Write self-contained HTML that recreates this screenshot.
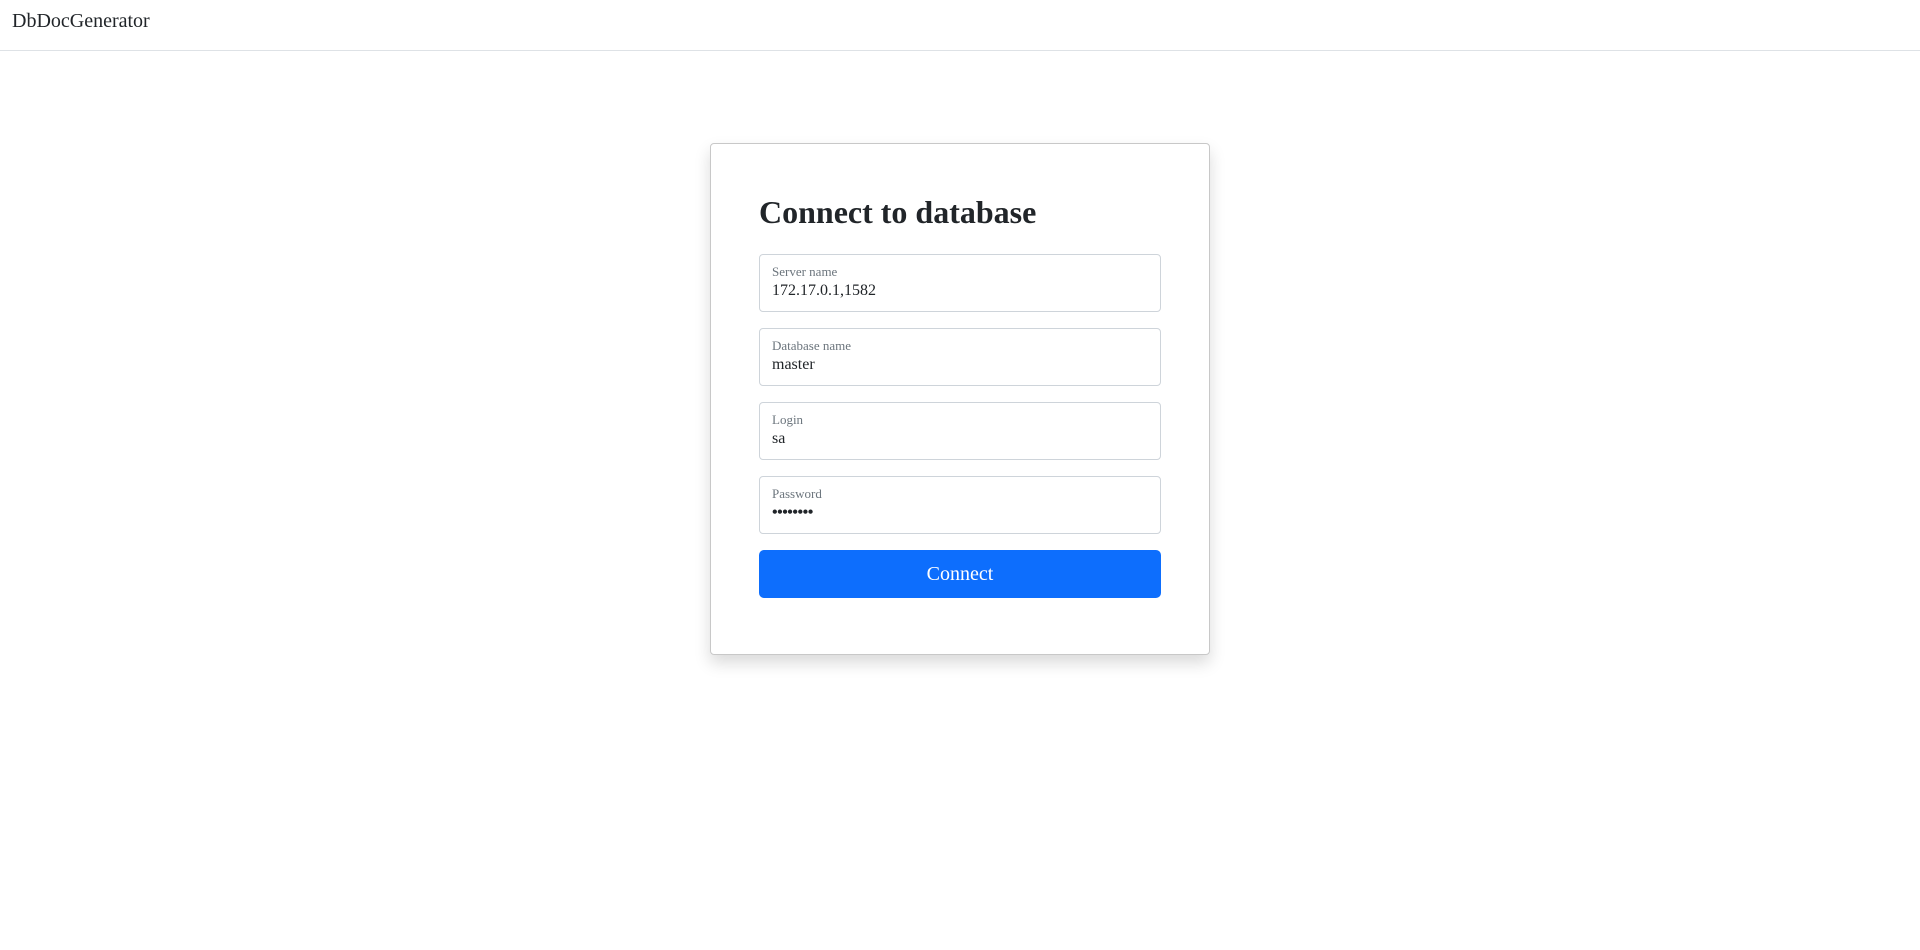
<!DOCTYPE html>
<html><head><style>
*{box-sizing:border-box;margin:0;padding:0}
body{width:1920px;height:950px;background:#fff;font-family:"Liberation Serif",serif;color:#212529;position:relative;overflow:hidden}
.nav{position:absolute;left:0;top:0;width:1920px;height:51px;border-bottom:1px solid #dee2e6}
.brand{position:absolute;left:12px;top:10px;font-size:20px;color:#212529}
.card{position:absolute;left:710px;top:143px;width:500px;height:512px;border:1px solid #c8c8c8;border-radius:4px;box-shadow:0 8px 16px rgba(0,0,0,.15)}
h2{position:absolute;left:48px;top:49px;font-size:32px;font-weight:bold;line-height:38px}
.f{position:absolute;left:48px;width:402px;height:58px;border:1px solid #ced4da;border-radius:4px}
.f .l{position:absolute;left:12px;top:9px;font-size:13px;color:#6c757d}
.f .v{position:absolute;left:12px;top:27px;font-size:16px;color:#212529}
.btn{position:absolute;left:48px;top:406px;width:402px;height:48px;background:#0d6efd;border-radius:5px;color:#fff;font-size:20px;text-align:center;line-height:48px}
</style></head><body>
<div class="nav"><div class="brand">DbDocGenerator</div></div>
<div class="card">
<h2>Connect to database</h2>
<div class="f" style="top:110px"><div class="l">Server name</div><div class="v">172.17.0.1,1582</div></div>
<div class="f" style="top:184px"><div class="l">Database name</div><div class="v">master</div></div>
<div class="f" style="top:258px"><div class="l">Login</div><div class="v">sa</div></div>
<div class="f" style="top:332px"><div class="l">Password</div><div class="v" style="font-weight:bold;letter-spacing:-0.5px">••••••••</div></div>
<div class="btn">Connect</div>
</div>
</body></html>
